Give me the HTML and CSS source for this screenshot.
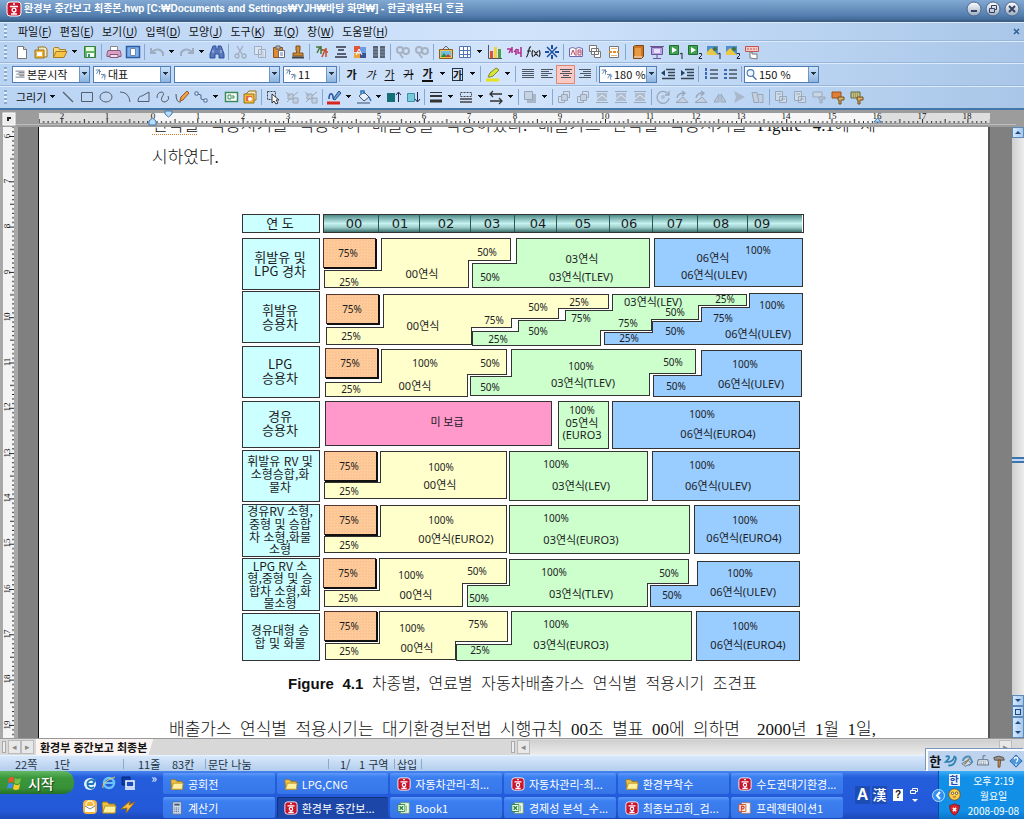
FILE: index.html
```html
<!DOCTYPE html>
<html lang="ko">
<head>
<meta charset="utf-8">
<title>환경부 중간보고 최종본.hwp</title>
<link rel="stylesheet" href="styles.css">
</head>
<body>
<svg class="defs" aria-hidden="true">
<defs>
<linearGradient id="head" x1="0" y1="0" x2="0" y2="1"><stop offset="0" stop-color="#4f8a88"/><stop offset=".2" stop-color="#7fb5b2"/><stop offset=".5" stop-color="#c4f2f0"/><stop offset=".72" stop-color="#9fd0cd"/><stop offset="1" stop-color="#3c6f6d"/></linearGradient>
<linearGradient id="orb" x1="0" y1="0" x2="0" y2="1"><stop offset="0" stop-color="#fff"/><stop offset="1" stop-color="#9aaabf"/></linearGradient>
<pattern id="dots" width="3" height="3" patternUnits="userSpaceOnUse"><rect width="3" height="3" fill="#fc9"/><path d="M0 0h1v1H0zM2 1h1v1H2z" fill="#f5bd92"/></pattern>
<pattern id="hticks" x="152" y="0" width="45.3" height="17" patternUnits="userSpaceOnUse"><path d="M.5 9v4M5 11v2M9.5 11v2M14 11v2M18.5 11v2M23 9v4M27.5 11v2M32 11v2M36.5 11v2M41 11v2" stroke="#222" fill="none"/></pattern>
<pattern id="vticks" x="0" y="9" width="16" height="45.3" patternUnits="userSpaceOnUse"><path d="M9 .5h5M12 5h2M12 9.5h2M12 14h2M12 18.5h2M10 23h4M12 27.5h2M12 32h2M12 36.5h2M12 41h2" stroke="#222" fill="none"/></pattern>
</defs>
<symbol id="hwp" viewBox="0 0 16 16"><rect x="1" y="1" width="14" height="14" rx="3" fill="#c8142d" stroke="#fff"/><path d="M7 3h2M4 5.500h8M5 13h6M8 11v2" stroke="#fff" stroke-width="1.400"/><circle cx="8" cy="9" r="1.900" fill="none" stroke="#fff" stroke-width="1.400"/></symbol>
<symbol id="new" viewBox="0 0 16 16"><path d="M3.500 2.500h6l3 3v9h-9z" fill="#fff" stroke="#777"/><path d="M9.500 2.500v3h3" fill="#ddd" stroke="#777"/></symbol>
<symbol id="newfold" viewBox="0 0 16 16"><path d="M5 3h7l2 2v8H7z" fill="#f5e9c4" stroke="#9a7420"/><path d="M2 6h9v8H2z" fill="#eeb53a" stroke="#9a7420"/><path d="M4 8h5v4H4z" fill="#fff"/></symbol>
<symbol id="fold" viewBox="0 0 16 16"><path d="M1.500 13.500v-9l1-1h4l1 2h6v2" fill="#f7d67a" stroke="#a67c1e"/><path d="M1.500 13.500L4 7.500h11l-3 6z" fill="#f6c445" stroke="#a67c1e"/></symbol>
<symbol id="folder" viewBox="0 0 16 16"><path d="M1 4l1-1h4l2 2h6v9H2z" fill="#f0c145" stroke="#9a7a20"/><path d="M2 13l2-6h11l-1 7H2z" fill="#fff0a0" stroke="#b8922a"/></symbol>
<symbol id="save" viewBox="0 0 16 16"><path d="M2.500 2.500h11v11h-11z" fill="#62b562" stroke="#35803b"/><path d="M4 3h8v4H4z" fill="#e4ffe0"/><path d="M5 9h7v4H5z" fill="#fff"/><path d="M6 10h2v3H6z" fill="#397"/></symbol>
<symbol id="print" viewBox="0 0 16 16"><path d="M4.500 2.500h7v4h-7z" fill="#fff" stroke="#888"/><path d="M2 6.500h12l1 3v3H1v-3z" fill="#d9a0c4" stroke="#875a7b"/><path d="M4 10.500h8v3H4z" fill="#f6dcf2" stroke="#875a7b"/></symbol>
<symbol id="preview" viewBox="0 0 16 16"><path d="M1.500 2.500h13v11h-13z" fill="#7fb0ee" stroke="#2d5ca5" stroke-width="1.500"/><path d="M5.500 4.500h5v7h-5z" fill="#fff" stroke="#6b87b5"/></symbol>
<symbol id="undo" viewBox="0 0 16 16"><path d="M2 4v5h5M3 8c4-4 9-3 11 1v3" fill="none" stroke="#9fadc0" stroke-width="2"/></symbol>
<symbol id="redo" viewBox="0 0 16 16"><path d="M14 4v5H9M13 8C9 4 4 5 2 9v3" fill="none" stroke="#9fadc0" stroke-width="2"/></symbol>
<symbol id="find" viewBox="0 0 16 16"><path d="M4 2h3v3h2V2h3l3 8v4h-5v-4H6v4H1v-4z" fill="#5878bd" stroke="#30509a"/><path d="M4 6v3M12 6v3" stroke="#bcd"/></symbol>
<symbol id="cut" viewBox="0 0 16 16"><g fill="none" stroke="#a0adbe" stroke-width="1.300"><path d="M4 2l5 8M10 2L5 10"/><circle cx="4" cy="12" r="2"/><circle cx="11" cy="12" r="2"/></g></symbol>
<symbol id="copy" viewBox="0 0 16 16"><path d="M2.500 2.500h7v8h-7zM6.500 5.500h7v8h-7z" fill="#dbe6f4" stroke="#a0adbe"/><path d="M8 8h4M8 10h4M8 12h4" stroke="#b6c1ce"/></symbol>
<symbol id="paste" viewBox="0 0 16 16"><path d="M2.500 3.500h9v10h-9z" fill="#dd8a35" stroke="#8a5524"/><path d="M5 2h4v3H5z" fill="#bbb" stroke="#666"/><path d="M7.500 6.500h6v7h-6z" fill="#fff" stroke="#667"/><path d="M9 9h3M9 11h3" stroke="#679"/></symbol>
<symbol id="stamp" viewBox="0 0 16 16"><path d="M6 2h4v4l-1 3h4v3H3V9h4L6 6z" fill="#c98a3a" stroke="#825017"/><path d="M2 13.500h12" stroke="#444" stroke-width="2"/></symbol>
<symbol id="charshape" viewBox="0 0 16 16"><path d="M2 3h4L3 9M7 2v8M7 6h2" stroke="#467a3b" stroke-width="1.500" fill="none"/><path d="M8 6h3l-3 7M12 4v9M12 8h2" stroke="#c44d2b" stroke-width="1.500" fill="none"/></symbol>
<symbol id="para" viewBox="0 0 16 16"><path d="M3 3h10M5 6h6M2 13h12M4 10h9" stroke="#334" stroke-width="1.600"/></symbol>
<symbol id="stylei" viewBox="0 0 16 16"><path d="M2 2h6v6H2z" fill="#e3543f"/><path d="M8 3h6v6H8z" fill="#6b9be0"/><path d="M2 9h6v5H2z" fill="#f0a23a"/><path d="M8 9h6v5H8z" fill="#3e4f92"/><path d="M4 11l3-6 3 6M5 9h4" stroke="#fff" fill="none"/></symbol>
<symbol id="cols" viewBox="0 0 16 16"><path d="M2 2h5v12H2zM9 2h5v12H9z" fill="#576273"/><path d="M2 5h5M9 5h5M2 8h5M9 8h5M2 11h5M9 11h5" stroke="#8794a6"/></symbol>
<symbol id="link" viewBox="0 0 16 16"><g fill="none" stroke="#a6b2c2" stroke-width="2"><circle cx="5" cy="6" r="3"/><circle cx="11" cy="7" r="3"/><path d="M5 10l3 4"/></g></symbol>
<symbol id="pic" viewBox="0 0 16 16"><path d="M5 5l3-3 3 3" fill="none" stroke="#666"/><path d="M1.500 5.500h13v9h-13z" fill="#f4c34e" stroke="#856022"/><path d="M3 7h10v6H3z" fill="#6fbee6"/><path d="M3 13l3-4 3 4z" fill="#2d8a3b"/><path d="M7 13l3-3 3 3z" fill="#c04030"/></symbol>
<symbol id="table" viewBox="0 0 16 16"><path d="M2.500 2.500h11v11h-11zM2.500 6.500h11M2.500 10.500h11M6.500 2.500v11M10.500 2.500v11" fill="#fff" stroke="#5277b3"/></symbol>
<symbol id="chart" viewBox="0 0 16 16"><path d="M1.500 1v13.500H15" stroke="#555" fill="none"/><path d="M3 7h3v7H3z" fill="#dc5437"/><path d="M7 3h3v11H7z" fill="#f3d23b"/><path d="M11 5h3v9h-3z" fill="#49a152"/></symbol>
<symbol id="art" viewBox="0 0 16 16"><path d="M1 5h4L3 9M6 3v6M8 8l3-3M10 5v6M12 5v4h3V3v10" fill="none" stroke="#b43390" stroke-width="1.600"/></symbol>
<symbol id="fx" viewBox="0 0 16 16"><path d="M6 3C3 2 4 13 1 13M2 7h4M8 6q-2 3 0 7M9 7l4 5M13 7l-4 5M14 6q2 3 0 7" fill="none" stroke="#222" stroke-width="1.200"/></symbol>
<symbol id="star" viewBox="0 0 16 16"><path d="M3 3l10 10M13 3L3 13" stroke="#1d4fa0" stroke-width="1.500"/><path d="M8 1v4M8 11v4M1 8h4M11 8h4" stroke="#1d4fa0" stroke-width="2"/></symbol>
<symbol id="dict" viewBox="0 0 16 16"><path d="M1.500 12.500v-8q3-2 6 0 3-2 7 0v8z" fill="#fff" stroke="#6a6aa8"/><path d="M3 11l2-5 2 5M8 5v7M10 6h3v5h-3zM10 8h3" stroke="#b64a6c" fill="none"/></symbol>
<symbol id="pages" viewBox="0 0 16 16"><path d="M2.500 1.500h7v6h-7zM4.500 4.500h7v6h-7zM7.500 7.500h6v6h-6z" fill="#fff" stroke="#777"/></symbol>
<symbol id="split" viewBox="0 0 16 16"><path d="M3.500 2.500h9v11h-9z" fill="#fff" stroke="#777"/><path d="M3 8h10" stroke="#e38e25" stroke-width="2" stroke-dasharray="3 1"/><path d="M5 4.500h6M5 11.500h6" stroke="#e8b775"/></symbol>
<symbol id="book" viewBox="0 0 16 16"><path d="M3.500 2.500l2-1h8v11l-2 2h-8z" fill="#cd7720" stroke="#7d4515"/><path d="M5 4h6v8H5z" fill="#e89b42"/><path d="M4 13h8" stroke="#fff"/></symbol>
<symbol id="screen" viewBox="0 0 16 16"><path d="M1 2.500h14M8 11v4M4 14.500h8" stroke="#6c5596"/><path d="M2.500 3.500h11v7h-11z" fill="#b6a3e3" stroke="#6c5596"/><path d="M5 5h6v4H5z" fill="#e8e0ff"/></symbol>
<symbol id="play1" viewBox="0 0 16 16"><path d="M1.500 1.500h9v9h-9z" fill="#3da151" stroke="#226b32"/><path d="M4 3l5 3-5 3z" fill="#fff"/><path d="M12 10l2-1v6" stroke="#223" fill="none"/></symbol>
<symbol id="play2" viewBox="0 0 16 16"><path d="M1.500 1.500h9v9h-9z" fill="#3da151" stroke="#226b32"/><path d="M4 3l5 3-5 3z" fill="#fff"/><path d="M12 9.500h2.500v2L12 14v.5h3" stroke="#223" fill="none"/></symbol>
<symbol id="photo1" viewBox="0 0 16 16"><path d="M1 2h11v9H1z" fill="#4f8fce"/><path d="M1 8l4-4 7 7H1z" fill="#eac842"/><circle cx="9" cy="5" r="2" fill="#416f35"/><path d="M12 10l2-1v6" stroke="#223" fill="none"/></symbol>
<symbol id="photo2" viewBox="0 0 16 16"><path d="M1 2h11v9H1z" fill="#4f8fce"/><path d="M1 8l4-4 7 7H1z" fill="#eac842"/><circle cx="9" cy="5" r="2" fill="#416f35"/><path d="M12 9.500h2.500v2L12 14v.5h3" stroke="#223" fill="none"/></symbol>
<symbol id="mapkey" viewBox="0 0 16 16"><path d="M1.500 2.500h13v5h-13z" fill="#f3cbc8" stroke="#c5534d"/><path d="M3 5h10" stroke="#c5534d" stroke-dasharray="2 1"/><path d="M6 14V8h2v2h5v5z" fill="#fff" stroke="#777"/></symbol>
<symbol id="mark" viewBox="0 0 16 16"><path d="M3 11l2-4 6-5 3 2-6 6-3 1z" fill="#d7e83a" stroke="#7e8428"/><path d="M1 14h13" stroke="#e9e21b" stroke-width="3"/></symbol>
<symbol id="aj" viewBox="0 0 16 16"><path d="M2 3.500h12M2 5.500h12M2 7.500h12M2 9.500h12M2 11.500h12" stroke="#4d5562"/></symbol>
<symbol id="al" viewBox="0 0 16 16"><path d="M2 3.500h12M2 5.500h8M2 7.500h11M2 9.500h7M2 11.500h12" stroke="#4d5562"/></symbol>
<symbol id="ac" viewBox="0 0 16 16"><path d="M2 3.500h12M4 5.500h8M2 7.500h12M5 9.500h6M3 11.500h10" stroke="#4d5562"/></symbol>
<symbol id="ar" viewBox="0 0 16 16"><path d="M2 3.500h12M6 5.500h8M3 7.500h11M7 9.500h7M2 11.500h12" stroke="#4d5562"/></symbol>
<symbol id="ind" viewBox="0 0 16 16"><path d="M6 3.500h9M8 6.500h7M8 9.500h7M2 12.500h13" stroke="#345" stroke-width="1.500"/><path d="M1 7l4-3v6z" fill="#246"/></symbol>
<symbol id="ind2" viewBox="0 0 16 16"><path d="M6 3.500h9M8 6.500h7M8 9.500h7M2 12.500h13" stroke="#345" stroke-width="1.500"/><path d="M6 7L2 4v6z" fill="#246"/></symbol>
<symbol id="list" viewBox="0 0 16 16"><path d="M7 4h8M7 8h8M7 12h8" stroke="#456" stroke-width="1.400"/><path d="M3 2v12" stroke="#3868b4" stroke-width="2" stroke-dasharray="3 1"/></symbol>
<symbol id="list2" viewBox="0 0 16 16"><path d="M7 4h8M7 8h8M7 12h8" stroke="#456" stroke-width="1.400"/><path d="M2 4h3M2 8h3M2 12h3" stroke="#3868b4" stroke-width="2"/></symbol>
<symbol id="glass" viewBox="0 0 16 16"><circle cx="6" cy="6" r="4.500" fill="#eef6ff" stroke="#4f79ad" stroke-width="1.500"/><path d="M9 10l5 5" stroke="#4f79ad" stroke-width="2"/></symbol>
<symbol id="ga" viewBox="0 0 16 16"><path d="M1 2h4L2 7M6 1v7M6 4h2M8 8h4l-3 5M13 7v8M13 10h2" fill="none" stroke="#5a80a8" stroke-width="1.200"/></symbol>
<symbol id="line" viewBox="0 0 16 16"><path d="M3 3l10 10" stroke="#555e6c" stroke-width="1.300"/></symbol>
<symbol id="rect" viewBox="0 0 16 16"><path d="M2.500 3.500h11v9h-11z" fill="none" stroke="#555e6c"/></symbol>
<symbol id="oval" viewBox="0 0 16 16"><ellipse cx="8" cy="8" rx="6" ry="5" fill="none" stroke="#555e6c"/></symbol>
<symbol id="arc" viewBox="0 0 16 16"><path d="M3 3q9 0 10 10" fill="none" stroke="#555e6c"/></symbol>
<symbol id="poly" viewBox="0 0 16 16"><path d="M2 12.500Q2 7 6 7l7-4v9.500z" fill="none" stroke="#555e6c"/></symbol>
<symbol id="curve" viewBox="0 0 16 16"><path d="M2 9q0-6 5-6 3 1 0 5-2 5 3 5 5-2 3-6" fill="none" stroke="#555e6c"/></symbol>
<symbol id="pen" viewBox="0 0 16 16"><path d="M2 5q0 9 5 8" fill="none" stroke="#555"/><path d="M6 12l1-4 6-6 2 2-6 7z" fill="#f0a04a" stroke="#95571d"/></symbol>
<symbol id="conn" viewBox="0 0 16 16"><path d="M2 3h3v3H2zM11 10h3v3h-3z" fill="#fff" stroke="#4b6a96"/><path d="M5 5l3 1v4l3 1" fill="none" stroke="#4b6a96"/></symbol>
<symbol id="tbox" viewBox="0 0 16 16"><path d="M2.500 3.500h12v9h-12z" fill="#fff" stroke="#3a8a5a" stroke-width="1.500"/><path d="M5 6h3v4H5zM10 6v4M10 8h2" stroke="#3a8a5a" fill="none"/></symbol>
<symbol id="clip" viewBox="0 0 16 16"><path d="M4 5l3-3h7v9h-2" fill="#f5e9c4" stroke="#99701b"/><path d="M2 5h10v9H2z" fill="#f1bd37" stroke="#99701b"/><path d="M4 7h6v5H4z" fill="#e8674a"/><circle cx="8" cy="10" r="2" fill="#fff"/></symbol>
<symbol id="sel" viewBox="0 0 16 16"><path d="M2.500 2.500h8v8h-8z" fill="none" stroke="#444" stroke-dasharray="2 1"/><path d="M7 5v9l2-2 2 3 2-1-2-3h3z" fill="#fff" stroke="#333"/></symbol>
<symbol id="grp" viewBox="0 0 16 16"><path d="M2 3l4 4M14 3L9 7M3 13l4-4M9 9h5v5H9zM4 5h5v5H4z" fill="#c3cfdf" stroke="#9aa8bb"/></symbol>
<symbol id="linec" viewBox="0 0 16 16"><path d="M3 10c0-7 4-6 4-2s3 1 6-5" fill="none" stroke="#2759a5" stroke-width="1.600"/><path d="M7 10l6-8 2 2-6 7z" fill="#6ba2de" stroke="#2a4d85"/><path d="M1 14h13" stroke="#d8261e" stroke-width="3"/></symbol>
<symbol id="fillc" viewBox="0 0 16 16"><path d="M3 7l5-4 5 5-5 4z" fill="#e8f0fa" stroke="#41536b"/><path d="M5 5V2h3v3M13 8l2 4" fill="none" stroke="#2b71bd" stroke-width="1.500"/><path d="M1 14h13" stroke="#6a7f9a" stroke-width="1.500"/></symbol>
<symbol id="front" viewBox="0 0 16 16"><path d="M1 4h8v9H1z" fill="#156f76"/><path d="M12.500 13V4M10 6l2.500-3L15 6" stroke="#224" fill="none"/></symbol>
<symbol id="back" viewBox="0 0 16 16"><path d="M2.500 4.500h7v8h-7z" fill="#77c9db" stroke="#3a91a8"/><path d="M12.500 3v9M10 10l2.500 3 2.500-3" stroke="#224" fill="none"/></symbol>
<symbol id="lw" viewBox="0 0 16 16"><path d="M2 3.500h12" stroke="#333"/><path d="M2 7h12" stroke="#333" stroke-width="2"/><path d="M2 12h12" stroke="#333" stroke-width="3"/></symbol>
<symbol id="ls" viewBox="0 0 16 16"><path d="M2.500 3.500h11v4h-11z" fill="none" stroke="#444" stroke-dasharray="2 1"/><path d="M2 10h12M2 13h12" stroke="#444" stroke-width="1.500"/></symbol>
<symbol id="arw" viewBox="0 0 16 16"><path d="M2 5h12M2 12h12M5 2L2 5l3 3M11 9l3 3-3 3" fill="none" stroke="#333" stroke-width="1.300"/></symbol>
<symbol id="gbox" viewBox="0 0 16 16"><path d="M5 5h9v9H5z" fill="#a9b6c7"/><path d="M2.500 2.500h8v8h-8z" fill="#c6d2e2" stroke="#97a5b8"/></symbol>
<symbol id="gtwo" viewBox="0 0 16 16"><path d="M7.500 2.500h6v6h-6zM2.500 7.500h6v6h-6z" fill="#d3dfee" stroke="#9aa8bb"/><path d="M5.500 5.500h6v6h-6z" fill="#c3d0e2" stroke="#9aa8bb"/></symbol>
<symbol id="gal" viewBox="0 0 16 16"><path d="M2 2.500h12M2 13.500h12" stroke="#9aa8bb"/><path d="M3 4h10v8H3z" fill="#b0bdce"/><path d="M3 10l5-4 5 4" fill="none" stroke="#e2eaf4"/></symbol>
<symbol id="grot" viewBox="0 0 16 16"><path d="M13 5a6 6 0 1 0 1 4M14 2v4h-4" fill="none" stroke="#9aa8bb" stroke-width="1.300"/><circle cx="8" cy="8" r="2" fill="#b0bdce"/></symbol>
<symbol id="gturn" viewBox="0 0 16 16"><path d="M2 13.500h12L9 8z" fill="#c3cfde" stroke="#98a6b9"/><path d="M3 9q1-5 7-5M8 2l3 2-3 3" fill="none" stroke="#98a6b9" stroke-width="1.300"/></symbol>
<symbol id="gtri" viewBox="0 0 16 16"><path d="M2 13l5-8v8zM9 13V5l5 8z" fill="#bac6d6" stroke="#98a6b9"/></symbol>
<symbol id="gflag" viewBox="0 0 16 16"><path d="M3 2l11 6-11 6 2-6z" fill="#aab7c8"/></symbol>
<symbol id="gskew" viewBox="0 0 16 16"><path d="M2 3.500h5l2 10H4zM8 5.500h5v8h-3" fill="#c3cfde" stroke="#98a6b9"/></symbol>
<symbol id="gdoc" viewBox="0 0 16 16"><path d="M2.500 2.500h7v9h-7zM6.500 7.500h7v6h-7z" fill="#cfdbe9" stroke="#9aa8bb"/><path d="M4 5h4M8 10h4" stroke="#9aa8bb"/></symbol>
<symbol id="brush" viewBox="0 0 16 16"><path d="M2 3h9v6H2z" fill="#e08038" stroke="#9b4f1c"/><path d="M8 8h6v3h-3v4h-2v-4H8z" fill="#ddae5c" stroke="#705020"/></symbol>
<symbol id="brush2" viewBox="0 0 16 16"><path d="M2 3h9v6H2z" fill="#c9bb7c" stroke="#5d6b3c"/><path d="M4 5h6M4 7h6" stroke="#6d7c50" stroke-dasharray="1 1"/><path d="M8 8h6v3h-3v4h-2v-4H8z" fill="#ddae5c" stroke="#705020"/></symbol>
<symbol id="gbrush" viewBox="0 0 16 16"><path d="M2 3h9v5H2z" fill="#c9d5e4" stroke="#9aa8bb"/><path d="M8 8h6v2h-3v4h-2v-4H8z" fill="#bac6d6" stroke="#9aa8bb"/></symbol>
<symbol id="ie" viewBox="0 0 16 16"><circle cx="8" cy="8" r="5" fill="none" stroke="#69c2ff" stroke-width="2.500"/><path d="M4 8h9" stroke="#69c2ff" stroke-width="2"/><path d="M2 13Q0 7 14 2" fill="none" stroke="#f2cc49"/></symbol>
<symbol id="globe" viewBox="0 0 16 16"><circle cx="8" cy="9" r="6" fill="#e4f4ff"/><path d="M12 6a4 4 0 1 0 0 6M5 9h6l3-6" fill="none" stroke="#2277bb" stroke-width="1.800"/></symbol>
<symbol id="pc" viewBox="0 0 16 16"><path d="M2 2h8v8H2z" fill="#0b3aa8" stroke="#06257a"/><path d="M6 6h8v6H6zM5 14h10" fill="#1c4cc0" stroke="#fff" stroke-width="1.500"/></symbol>
<symbol id="mail" viewBox="0 0 16 16"><rect x="1" y="1" width="14" height="14" rx="4" fill="#f6b63c"/><circle cx="8" cy="6" r="4" fill="none" stroke="#fff2c8" stroke-width="1.500"/><path d="M3 7h10v6H3z" fill="#fff"/><path d="M3 7l5 3 5-3" stroke="#888" fill="none"/></symbol>
<symbol id="bolt" viewBox="0 0 16 16"><path d="M1 10l9-8-1 4 6-3-9 11 1-5z" fill="#ffc144" stroke="#a36a10"/></symbol>
<symbol id="calc" viewBox="0 0 16 16"><path d="M3 1h10v14H3z" fill="#c8d6ec" stroke="#56709a"/><path d="M5 3h6v2H5z" fill="#456"/><path d="M5 8h6M5 10h6M5 12h6" stroke="#456" stroke-dasharray="1 1"/></symbol>
<symbol id="xl" viewBox="0 0 16 16"><path d="M4 2h10v12H4z" fill="#f3fff0" stroke="#709670"/><path d="M1 4h8v8H1z" fill="#eaffea" stroke="#29803c"/><path d="M3 6l4 4M7 6l-4 4" stroke="#29803c" stroke-width="1.500"/><path d="M11 5v7" stroke="#79ad79"/></symbol>
<symbol id="ppt" viewBox="0 0 16 16"><path d="M4 2h10v12H4z" fill="#fff" stroke="#a87868"/><path d="M1 4h8v8H1z" fill="#fff0e8" stroke="#d0492c"/><path d="M4 11V6h2q2 1 0 3H4" fill="none" stroke="#d0492c" stroke-width="1.500"/></symbol>
<symbol id="win" viewBox="0 0 16 16"><path d="M2 3q3-2 5 0L6 8Q4 6 1 8z" fill="#f0562b"/><path d="M8 3q3 2 6 0l-1 5q-3 2-6 0z" fill="#7bc043"/><path d="M1 9q3-2 5 0l-1 5q-2-2-5 0z" fill="#3f8df0"/><path d="M7 9q3 2 6 0l-1 5q-3 2-6 0z" fill="#fbc92e"/></symbol>
<symbol id="bird" viewBox="0 0 16 16"><path d="M3 3q6-2 3 3L3 9h4q5-1 6-6 3 1 1 5-2 6-8 5" fill="none" stroke="#2f82b5" stroke-width="2"/></symbol>
<symbol id="pad" viewBox="0 0 16 16"><path d="M3 8q2-6 8-5l3 6-4 4" fill="none" stroke="#4f8fb5" stroke-width="2"/><path d="M2 11l7-4 4 4-7 3z" fill="#c9dcea" stroke="#5d7488"/><path d="M5 12l6-7" stroke="#a07a45" stroke-width="1.500"/></symbol>
<symbol id="kbd" viewBox="0 0 16 16"><path d="M8 6V2h3" stroke="#567" fill="none"/><path d="M2.500 6.500h11l1 6h-13z" fill="#e6edf5" stroke="#567"/><path d="M4 9h8M4 11h8" stroke="#678" stroke-dasharray="1 1"/></symbol>
<symbol id="hammer" viewBox="0 0 16 16"><path d="M2 4q6-3 11 0l1 3H3z" fill="#98918a" stroke="#554c45"/><path d="M7 7h3l-1 8H7z" fill="#c79058" stroke="#704a25"/></symbol>
<symbol id="help" viewBox="0 0 16 16"><path d="M8 1l7 7-7 7-7-7z" fill="#4b98dd" stroke="#2461a0"/><circle cx="8" cy="8" r="5" fill="#4b98dd"/><path d="M6 6q0-2 2-2t2 2-2 3M8 11v2" stroke="#fff" stroke-width="1.500" fill="none"/></symbol>
<symbol id="smile" viewBox="0 0 16 16"><circle cx="8" cy="8" r="7" fill="#ffcf4d" stroke="#7a4a10"/><circle cx="5.500" cy="6.500" r="1.500" fill="#fff" stroke="#5a3a10"/><circle cx="10.500" cy="6.500" r="1.500" fill="#fff" stroke="#5a3a10"/><path d="M6 11h4" stroke="#7a3a10"/></symbol>
<symbol id="shield" viewBox="0 0 16 16"><path d="M8 1q3 2 6 2 0 9-6 12Q2 12 2 3q3 0 6-2z" fill="#d9252a" stroke="#7a1520"/><path d="M6 6l4 4M10 6l-4 4" stroke="#fff" stroke-width="1.800"/></symbol>
</svg>

<div class="app">
<header class="title">
  <svg class="ic logo"><use href="#hwp"/></svg>
  <h1>환경부 중간보고 최종본.hwp [C:₩Documents and Settings₩YJH₩바탕 화면₩] - 한글과컴퓨터 ᄒᆞᆫ글</h1>
  <div class="winbtns">
    <button aria-label="최소화"><svg width="16" height="16"><circle cx="8" cy="8" r="7" fill="url(#orb)" stroke="#48678e"/><path d="M5 10h6" stroke="#346" stroke-width="2"/></svg></button>
    <button aria-label="이전 크기로"><svg width="16" height="16"><circle cx="8" cy="8" r="7" fill="url(#orb)" stroke="#48678e"/><path d="M6.500 7V4.500h5v4H9M4.500 7.500h5v4h-5z" fill="none" stroke="#346"/></svg></button>
    <button aria-label="닫기"><svg width="16" height="16"><circle cx="8" cy="8" r="7" fill="url(#orb)" stroke="#48678e"/><path d="M5 5l6 6M11 5l-6 6" stroke="#346" stroke-width="2"/></svg></button>
  </div>
</header>
<nav class="bar menu"><i class="grip"></i>
  <button>파일(<u>F</u>)</button><button>편집(<u>E</u>)</button><button>보기(<u>U</u>)</button><button>입력(<u>D</u>)</button><button>모양(<u>J</u>)</button><button>도구(<u>K</u>)</button><button>표(<u>Q</u>)</button><button>창(<u>W</u>)</button><button>도움말(<u>H</u>)</button>
  <button class="docx" aria-label="문서 닫기"><svg width="7" height="7"><path d="M1 1l5 5M6 1L1 6" stroke="#2c5f96" stroke-width="1.500"/></svg></button>
</nav>
<div class="bar tools"><i class="grip"></i>
  <button class="t" aria-label="새 문서"><svg class="ic"><use href="#new"/></svg></button><button class="t" aria-label="문서마당"><svg class="ic"><use href="#newfold"/></svg></button><button class="t" aria-label="불러오기"><svg class="ic"><use href="#fold"/></svg></button><i class="dn"></i><button class="t" aria-label="저장"><svg class="ic"><use href="#save"/></svg></button><i class="sp"></i>
  <button class="t" aria-label="인쇄"><svg class="ic"><use href="#print"/></svg></button><button class="t" aria-label="미리보기"><svg class="ic"><use href="#preview"/></svg></button><i class="sp"></i>
  <button class="t" aria-label="되돌리기"><svg class="ic"><use href="#undo"/></svg></button><i class="dn"></i><button class="t" aria-label="다시 실행"><svg class="ic"><use href="#redo"/></svg></button><i class="dn"></i><button class="t" aria-label="찾기"><svg class="ic"><use href="#find"/></svg></button><i class="sp"></i>
  <button class="t" aria-label="오려두기"><svg class="ic"><use href="#cut"/></svg></button><button class="t" aria-label="복사"><svg class="ic"><use href="#copy"/></svg></button><button class="t" aria-label="붙이기"><svg class="ic"><use href="#paste"/></svg></button><button class="t" aria-label="모양 복사"><svg class="ic"><use href="#stamp"/></svg></button><i class="sp"></i>
  <button class="t" aria-label="글자 모양"><svg class="ic"><use href="#charshape"/></svg></button><button class="t" aria-label="문단 모양"><svg class="ic"><use href="#para"/></svg></button><button class="t" aria-label="스타일"><svg class="ic"><use href="#stylei"/></svg></button><button class="t" aria-label="다단"><svg class="ic"><use href="#cols"/></svg></button><i class="sp"></i>
  <button class="t" aria-label="연결"><svg class="ic"><use href="#link"/></svg></button><button class="t" aria-label="연결 해제"><svg class="ic"><use href="#link"/></svg></button><i class="sp"></i>
  <button class="t" aria-label="그림"><svg class="ic"><use href="#pic"/></svg></button><button class="t" aria-label="표"><svg class="ic"><use href="#table"/></svg></button><i class="dn"></i><button class="t" aria-label="차트"><svg class="ic"><use href="#chart"/></svg></button><button class="t" aria-label="글맵시"><svg class="ic"><use href="#art"/></svg></button><button class="t" aria-label="수식"><svg class="ic"><use href="#fx"/></svg></button><button class="t" aria-label="문자표"><svg class="ic"><use href="#star"/></svg></button><i class="sp"></i>
  <button class="t" aria-label="사전"><svg class="ic"><use href="#dict"/></svg></button><button class="t" aria-label="쪽 모양"><svg class="ic"><use href="#pages"/></svg></button><button class="t" aria-label="쪽 나누기"><svg class="ic"><use href="#split"/></svg></button><i class="sp"></i>
  <button class="t" aria-label="책"><svg class="ic"><use href="#book"/></svg></button><button class="t" aria-label="프레젠테이션"><svg class="ic"><use href="#screen"/></svg></button><button class="t" aria-label="매크로 1"><svg class="ic"><use href="#play1"/></svg></button><button class="t" aria-label="매크로 2"><svg class="ic"><use href="#play2"/></svg></button><button class="t" aria-label="그림 1"><svg class="ic"><use href="#photo1"/></svg></button><button class="t" aria-label="그림 2"><svg class="ic"><use href="#photo2"/></svg></button><button class="t" aria-label="단축키"><svg class="ic"><use href="#mapkey"/></svg></button>
</div>
<div class="bar tools fmt"><i class="grip"></i>
  <label class="combo w78"><svg class="ic s"><use href="#ar"/></svg><select aria-label="스타일"><option>본문시작</option></select><i class="dd"></i></label>
  <label class="combo w78"><svg class="ic s"><use href="#ga"/></svg><select aria-label="언어"><option>대표</option></select><i class="dd"></i></label>
  <label class="combo w106"><select aria-label="글꼴"><option></option></select><i class="dd"></i></label>
  <label class="combo w54"><svg class="ic s"><use href="#ga"/></svg><select aria-label="크기"><option>11</option></select><i class="dd"></i></label><i class="sp"></i>
  <button class="t g b" aria-label="진하게">가</button><button class="t g it" aria-label="기울임">가</button><button class="t g un" aria-label="밑줄">가</button><button class="t g st" aria-label="취소선">가</button><button class="t g b" aria-label="글자 색"><span class="ub">가</span></button><i class="dn"></i><button class="t g b" aria-label="테두리"><span class="bx">가</span></button><i class="dn"></i><i class="sp"></i>
  <button class="t" aria-label="형광펜"><svg class="ic"><use href="#mark"/></svg></button><i class="dn"></i><i class="sp"></i>
  <button class="t" aria-label="양쪽 정렬"><svg class="ic"><use href="#aj"/></svg></button><button class="t" aria-label="왼쪽 정렬"><svg class="ic"><use href="#al"/></svg></button><button class="t on" aria-label="가운데 정렬"><svg class="ic"><use href="#ac"/></svg></button><button class="t" aria-label="오른쪽 정렬"><svg class="ic"><use href="#ar"/></svg></button><i class="sp"></i>
  <label class="combo w58"><svg class="ic s"><use href="#ga"/></svg><select aria-label="줄 간격"><option>180 %</option></select><i class="dd"></i></label>
  <button class="t" aria-label="내어쓰기"><svg class="ic"><use href="#ind"/></svg></button><button class="t" aria-label="들여쓰기"><svg class="ic"><use href="#ind2"/></svg></button><i class="sp"></i>
  <button class="t" aria-label="번호"><svg class="ic"><use href="#list"/></svg></button><button class="t" aria-label="글머리표"><svg class="ic"><use href="#list2"/></svg></button><i class="sp"></i>
  <label class="combo w75"><svg class="ic s"><use href="#glass"/></svg><select aria-label="확대"><option>150 %</option></select><i class="dd"></i></label>
</div>
<div class="bar tools draw"><i class="grip"></i>
  <button class="dlabel">그리기</button><i class="dn"></i>
  <button class="t" aria-label="선"><svg class="ic"><use href="#line"/></svg></button><button class="t" aria-label="사각형"><svg class="ic"><use href="#rect"/></svg></button><button class="t" aria-label="타원"><svg class="ic"><use href="#oval"/></svg></button><button class="t" aria-label="호"><svg class="ic"><use href="#arc"/></svg></button><button class="t" aria-label="다각형"><svg class="ic"><use href="#poly"/></svg></button><button class="t" aria-label="곡선"><svg class="ic"><use href="#curve"/></svg></button><button class="t" aria-label="자유선"><svg class="ic"><use href="#pen"/></svg></button><button class="t" aria-label="연결선"><svg class="ic"><use href="#conn"/></svg></button><i class="dn"></i><button class="t" aria-label="글상자"><svg class="ic"><use href="#tbox"/></svg></button><button class="t" aria-label="그리기마당"><svg class="ic"><use href="#clip"/></svg></button><i class="sp"></i>
  <button class="t" aria-label="개체 선택"><svg class="ic"><use href="#sel"/></svg></button><button class="t" aria-label="묶기"><svg class="ic"><use href="#grp"/></svg></button><button class="t" aria-label="풀기"><svg class="ic"><use href="#grp"/></svg></button><i class="sp"></i>
  <button class="t" aria-label="선 색"><svg class="ic"><use href="#linec"/></svg></button><i class="dn"></i><button class="t" aria-label="채우기 색"><svg class="ic"><use href="#fillc"/></svg></button><i class="dn"></i><button class="t" aria-label="앞으로"><svg class="ic"><use href="#front"/></svg></button><button class="t" aria-label="뒤로"><svg class="ic"><use href="#back"/></svg></button><i class="sp"></i>
  <button class="t" aria-label="선 굵기"><svg class="ic"><use href="#lw"/></svg></button><i class="dn"></i><button class="t" aria-label="선 종류"><svg class="ic"><use href="#ls"/></svg></button><i class="dn"></i><button class="t" aria-label="화살표"><svg class="ic"><use href="#arw"/></svg></button><i class="dn"></i><i class="sp"></i>
  <button class="t" aria-label="그림자"><svg class="ic"><use href="#gbox"/></svg></button><i class="dn"></i><i class="sp"></i>
  <button class="t" aria-label="맨 앞"><svg class="ic"><use href="#gtwo"/></svg></button><button class="t" aria-label="맨 뒤"><svg class="ic"><use href="#gtwo"/></svg></button><button class="t" aria-label="위 맞춤"><svg class="ic"><use href="#gal"/></svg></button><button class="t" aria-label="중간 맞춤"><svg class="ic"><use href="#gal"/></svg></button><button class="t" aria-label="아래 맞춤"><svg class="ic"><use href="#gal"/></svg></button><i class="sp"></i>
  <button class="t" aria-label="회전"><svg class="ic"><use href="#grot"/></svg></button><button class="t" aria-label="왼쪽 회전"><svg class="ic"><use href="#gturn"/></svg></button><button class="t" aria-label="오른쪽 회전"><svg class="ic"><use href="#gturn"/></svg></button><button class="t" aria-label="좌우 대칭"><svg class="ic"><use href="#gtri"/></svg></button><button class="t" aria-label="상하 대칭"><svg class="ic"><use href="#gflag"/></svg></button><button class="t" aria-label="기울이기"><svg class="ic"><use href="#gskew"/></svg></button><i class="sp"></i>
  <button class="t" aria-label="개체 복사"><svg class="ic"><use href="#gdoc"/></svg></button><button class="t" aria-label="개체 붙이기"><svg class="ic"><use href="#gdoc"/></svg></button><button class="t" aria-label="속성 복사"><svg class="ic"><use href="#gbrush"/></svg></button><button class="t" aria-label="속성 붙이기"><svg class="ic"><use href="#brush"/></svg></button><button class="t" aria-label="기본 속성"><svg class="ic"><use href="#brush2"/></svg></button>
</div>

<div class="hruler">
<svg width="100%" height="17" aria-hidden="true">
<rect width="100%" height="17" fill="#9c9c9c"/><rect x="3" y="3" width="12" height="12" fill="#ececec" stroke="#fff"/><path d="M8 11V8h3" stroke="#222" fill="none" stroke-width="2"/>
<rect x="39" y="3" width="951" height="10" fill="#dedede"/><rect x="152" y="3" width="726" height="10" fill="#f6f6f6"/><rect x="39" y="3" width="951" height="10" fill="url(#hticks)"/>
<path d="M16 14.500h1000" stroke="#bdbdbd"/>
<g class="rnum"><text x="62" y="9">2</text><text x="107" y="9">1</text><text x="153" y="9">0</text><text x="198" y="9">1</text><text x="243" y="9">2</text><text x="288" y="9">3</text><text x="334" y="9">4</text><text x="379" y="9">5</text><text x="424" y="9">6</text><text x="469" y="9">7</text><text x="515" y="9">8</text><text x="560" y="9">9</text><text x="605" y="9">10</text><text x="650" y="9">11</text><text x="696" y="9">12</text><text x="741" y="9">13</text><text x="786" y="9">14</text><text x="832" y="9">15</text><text x="877" y="9">16</text><text x="922" y="9">17</text><text x="967" y="9">18</text></g>
<path d="M149 15v-4l3.500-3 3.500 3v4zM165 1h7v3l-3.500 3L165 4zM874 12l3.500-4 3.500 4z" fill="#b9dcf8" stroke="#3c78b4"/>
</svg></div>

<main class="doc">
  <svg class="vruler" width="18" height="100%" aria-hidden="true"><rect width="18" height="100%" fill="#a8a8a8"/><rect x="3" width="11" height="100%" fill="#f4f4f4"/><rect width="14" height="100%" fill="url(#vticks)"/>
  <g class="rnum"><text transform="translate(10 9) rotate(-90)">6</text><text transform="translate(10 54) rotate(-90)">7</text><text transform="translate(10 99) rotate(-90)">8</text><text transform="translate(10 145) rotate(-90)">9</text><text transform="translate(10 190) rotate(-90)">10</text><text transform="translate(10 235) rotate(-90)">11</text><text transform="translate(10 280) rotate(-90)">12</text><text transform="translate(10 326) rotate(-90)">13</text><text transform="translate(10 371) rotate(-90)">14</text><text transform="translate(10 416) rotate(-90)">15</text><text transform="translate(10 462) rotate(-90)">16</text><text transform="translate(10 507) rotate(-90)">17</text><text transform="translate(10 552) rotate(-90)">18</text><text transform="translate(10 598) rotate(-90)">19</text></g></svg>
  <article class="page">
    <p class="full first"><span class="sq">연식별</span> 적용시기를 적용하여 배출량을 적용하였다. 배출가스 연식별 적용시기를 Figure 4.1에 제</p>
    <p>시하였다.</p>
    <svg class="fig" width="564" height="450" viewBox="241 212 564 450" role="img" aria-label="연식별 적용시기 조견표">
      <g class="c"><path d="M242.500 214.500h77v18h-77zM242.500 238.500h77v51h-77zM242.500 291.500h77v51h-77zM242.500 346.500h77v51h-77zM242.500 401.500h77v46h-77zM242.500 450.500h77v51h-77zM242.500 504.500h77v52h-77zM242.500 558.500h77v52h-77zM242.500 613.500h77v47h-77z"/></g>
      <path class="w" d="M323.500 214.500h480v18h-480z"/><path fill="url(#head)" d="M324 215h478v17H324z"/>
      <path class="l" d="M378.500 214v18M419.500 214v18M470.500 214v18M514.500 214v18M556.500 214v18M609.500 214v18M652.500 214v18M697.500 214v18M747.500 214v18"/>
      <g class="y"><path d="M381.500 238.500h129v22h-42v27h-144v-17h57zM383.500 294.500h225v14h-50v10h-47v9h-40v17h-145v-17h57zM381.500 349.500h125v25h-39v22h-142v-14h56zM380.500 451.500h126v47h-182v-16h56zM380.500 505.500h126v47h-182v-16h56zM379.500 558.500h127v25h-44v23h-138v-16h55zM379.500 611.500h128v30h-52v18h-130v-16h54z"/></g>
      <g class="g"><path d="M516.500 238.500h133v49h-177v-24h44zM472.500 331.500h46v-11h47v-10h47v-16h134v11h-48v14h-47v11h-51v15h-128zM511.500 349.500h184v24h-46v22h-179v-19h41zM558.500 401.500h50v47h-50zM509.500 451.500h138v49h-138zM509.500 505.500h180v48h-180zM509.500 559.500h179v24h-41v23h-180v-21h42zM511.500 611.500h180v49h-235v-16h55z"/></g>
      <g class="b"><path d="M654.500 238.500h148v48h-148zM604.500 332.500h48v-11h49v-14h48v-14h53v51h-198zM701.500 350.500h100v46h-148v-21h48zM612.500 401.500h187v47h-187zM652.500 451.500h147v49h-147zM694.500 505.500h105v48h-105zM697.500 561.500h102v45h-149v-21h47zM696.500 611.500h103v49h-103z"/></g>
      <path class="p" d="M325.500 401.500h226v44h-226z"/>
      <g class="o"><path d="M323.500 238.500h52v29h-52zM326.500 294.500h52v29h-52zM325.500 348.500h52v29h-52zM324.500 451.500h52v29h-52zM324.500 505.500h52v29h-52zM323.500 558.500h52v29h-52zM324.500 611.500h52v29h-52z"/></g>
      <path class="k" d="M376 239v29h-52M379 295v29h-52M378 349v29h-52M377 452v29h-52M377 506v29h-52M376 559v29h-52M377 612v29h-52"/>
      <g class="h"><text x="280" y="228" class="kr">연 도</text><text x="354" y="228">00</text><text x="400" y="228">01</text><text x="446" y="228">02</text><text x="492" y="228">03</text><text x="538" y="228">04</text><text x="583" y="228">05</text><text x="629" y="228">06</text><text x="675" y="228">07</text><text x="721" y="228">08</text><text x="762" y="228">09</text></g>
      <g class="n"><text x="280" y="262">휘발유 및</text><text x="280" y="276">LPG 경차</text><text x="280" y="315">휘발유</text><text x="280" y="329">승용차</text><text x="280" y="369">LPG</text><text x="280" y="383">승용차</text><text x="280" y="421">경유</text><text x="280" y="435">승용차</text></g>
      <g class="m"><text x="280" y="466">휘발유 RV 및</text><text x="280" y="479">소형승합,화</text><text x="280" y="492">물차</text><text x="280" y="516">경유RV 소형,</text><text x="280" y="529">중형 및 승합</text><text x="280" y="542">차 소형,화물</text><text x="280" y="554">소형</text><text x="280" y="571">LPG RV 소</text><text x="280" y="583">형,중형 및 승</text><text x="280" y="596">합차 소형,화</text><text x="280" y="608">물소형</text><text x="280" y="635">경유대형 승</text><text x="280" y="648">합 및 화물</text></g>
      <g class="v">
      <text x="348" y="257">75%</text><text x="349" y="286">25%</text><text x="487" y="256">50%</text><text x="490" y="281">50%</text><text x="758" y="254">100%</text>
      <text x="352" y="313">75%</text><text x="351" y="340">25%</text><text x="494" y="324">75%</text><text x="498" y="343">25%</text><text x="538" y="311">50%</text><text x="538" y="335">50%</text><text x="579" y="306">25%</text><text x="581" y="322">75%</text><text x="628" y="327">75%</text><text x="629" y="342">25%</text><text x="675" y="316">50%</text><text x="675" y="335">50%</text><text x="725" y="303">25%</text><text x="723" y="322">75%</text><text x="772" y="309">100%</text>
      <text x="350" y="367">75%</text><text x="351" y="393">25%</text><text x="425" y="367">100%</text><text x="490" y="367">50%</text><text x="490" y="391">50%</text><text x="581" y="370">100%</text><text x="673" y="366">50%</text><text x="676" y="390">50%</text><text x="745" y="368">100%</text>
      <text x="582" y="414">100%</text><text x="702" y="418">100%</text>
      <text x="349" y="470">75%</text><text x="349" y="495">25%</text><text x="441" y="471">100%</text><text x="556" y="468">100%</text><text x="702" y="469">100%</text>
      <text x="349" y="524">75%</text><text x="349" y="549">25%</text><text x="441" y="524">100%</text><text x="556" y="522">100%</text><text x="745" y="524">100%</text>
      <text x="348" y="577">75%</text><text x="348" y="602">25%</text><text x="411" y="579">100%</text><text x="477" y="575">50%</text><text x="479" y="602">50%</text><text x="554" y="576">100%</text><text x="669" y="577">50%</text><text x="672" y="599">50%</text><text x="740" y="577">100%</text>
      <text x="349" y="630">75%</text><text x="349" y="655">25%</text><text x="412" y="632">100%</text><text x="478" y="628">75%</text><text x="480" y="654">25%</text><text x="556" y="628">100%</text><text x="745" y="630">100%</text></g>
      <g class="q">
      <text x="422" y="278">00연식</text><text x="582" y="263">03연식</text><text x="581" y="281">03연식(TLEV)</text><text x="713" y="262">06연식</text><text x="714" y="279">06연식(ULEV)</text>
      <text x="423" y="330">00연식</text><text x="653" y="306">03연식(LEV)</text><text x="758" y="338">06연식(ULEV)</text>
      <text x="415" y="390">00연식</text><text x="583" y="387">03연식(TLEV)</text><text x="751" y="388">06연식(ULEV)</text>
      <text x="447" y="426">미 보급</text><text x="582" y="427">05연식</text><text x="582" y="439">(EURO3</text><text x="718" y="438">06연식(EURO4)</text>
      <text x="440" y="489">00연식</text><text x="581" y="490">03연식(LEV)</text><text x="718" y="490">06연식(ULEV)</text>
      <text x="456" y="543">00연식(EURO2)</text><text x="581" y="544">03연식(EURO3)</text><text x="744" y="542">06연식(EURO4)</text>
      <text x="416" y="599">00연식</text><text x="581" y="598">03연식(TLEV)</text><text x="743" y="596">06연식(ULEV)</text>
      <text x="417" y="652">00연식</text><text x="571" y="649">03연식(EURO3)</text><text x="748" y="649">06연식(EURO4)</text></g>
    </svg>
    <p class="full cap"><b>Figure 4.1</b> 차종별, 연료별 자동차배출가스 연식별 적용시기 조견표</p>
    <p class="full last">배출가스 연식별 <span class="sq">적용시기</span>는 대기환경보전법 시행규칙 00조 별표 00에 의하면 &nbsp;2000년 1월 1일,</p>
  </article>
  <div class="vscroll"><button aria-label="위로"><i class="up"></i></button><div class="track"><i class="thumb"></i></div><button aria-label="아래로"><i class="down"></i></button><button aria-label="쪽 선택"><i class="sq0"></i></button><button class="tall" aria-label="이전/다음 쪽"><i class="up"></i><i class="down"></i></button></div>
</main>

<div class="tabs"><i class="split"></i><button class="nav" aria-label="이전 탭">◂</button><button class="nav" aria-label="다음 탭">▸</button><button class="tab">환경부 중간보고 최종본</button>
  <div class="hscroll"><i class="split"></i><button class="nav" aria-label="왼쪽">◂</button><div class="htrack"></div><button class="nav" aria-label="오른쪽">▸</button></div></div>
<footer class="status"><span class="a">22쪽</span><span class="d">1단</span><span class="c1 bl">11줄</span><span class="c2">83칸</span><span class="c3 bl">문단 나눔</span><span class="c4 bl">1/</span><span class="c5">1 구역</span><span class="c6 bl">삽입</span><span class="bl">&nbsp;</span>
  <div class="ime"><b>한</b><svg class="ic"><use href="#bird"/></svg><svg class="ic"><use href="#pad"/></svg><svg class="ic"><use href="#kbd"/></svg><svg class="ic"><use href="#hammer"/></svg><svg class="ic"><use href="#help"/></svg></div>
</footer>
</div>

<footer class="taskbar">
  <button class="start"><svg class="ic"><use href="#win"/></svg>시작</button>
  <div class="quick"><svg class="ic"><use href="#globe"/></svg><svg class="ic"><use href="#ie"/></svg><svg class="ic"><use href="#pc"/></svg><svg class="ic"><use href="#mail"/></svg><svg class="ic"><use href="#folder"/></svg><svg class="ic"><use href="#bolt"/></svg></div>
  <span class="more">»</span>
  <div class="tasks">
    <button><svg class="ic"><use href="#folder"/></svg>공회전</button><button><svg class="ic"><use href="#folder"/></svg>LPG,CNG</button><button><svg class="ic"><use href="#hwp"/></svg>자동차관리-최...</button><button><svg class="ic"><use href="#hwp"/></svg>자동차관리-최...</button><button><svg class="ic"><use href="#folder"/></svg>환경부착수</button><button><svg class="ic"><use href="#hwp"/></svg>수도권대기환경...</button>
    <button><svg class="ic"><use href="#calc"/></svg>계산기</button><button class="act"><svg class="ic"><use href="#hwp"/></svg>환경부 중간보...</button><button><svg class="ic"><use href="#xl"/></svg>Book1</button><button><svg class="ic"><use href="#xl"/></svg>경제성 분석_수...</button><button><svg class="ic"><use href="#hwp"/></svg>최종보고회_검...</button><button><svg class="ic"><use href="#ppt"/></svg>프레젠테이션1</button>
  </div>
  <div class="lang"><b class="on1">A</b><b class="on1 han">漢</b><b class="qm">?</b><svg class="ic" viewBox="0 0 16 16"><path d="M5.500 3.500V1.500h5v3h-2M3.500 3.500h5v3h-5z" fill="none" stroke="#fff"/><path d="M5 12h6l-3 3z" fill="#fff"/></svg></div>
  <div class="tray"><button class="exp" aria-label="숨겨진 아이콘"><svg width="11" height="11"><path d="M7 2L4 5.500 7 9" fill="none" stroke="#fff" stroke-width="2"/></svg></button><div class="ticons"><b>한</b><svg class="ic"><use href="#smile"/></svg><svg class="ic"><use href="#shield"/></svg></div><div class="clock"><span>오후 2:19</span><span>월요일</span><span>2008-09-08</span></div></div>
</footer>
</body>
</html>
```
FILE: styles.css
```css
* { box-sizing: border-box; }
body { margin: 0; height: 100vh; display: flex; flex-direction: column; overflow: hidden; font: 12px/16px "Noto Sans CJK KR", sans-serif; color: #111; }
button { margin: 0; padding: 0; border: 0; background: none; font: inherit; color: inherit; white-space: nowrap; }
i { font-style: normal; flex: none; }
.defs { position: absolute; width: 0; height: 0; }
.ic { width: 16px; height: 16px; flex: none; display: block; }
.app { flex: 1; min-height: 0; display: flex; flex-direction: column; }
.title { height: 22px; flex: none; display: flex; align-items: center; padding: 0 4px 2px 6px; background: linear-gradient(#82a9d3, #7199c5 30%, #5580af 75%, #41699a); border-bottom: 2px solid #3c5f86; color: #fff; }
.title h1 { flex: 1; margin: 0 0 0 2px; font: 700 10px/16px "Liberation Sans", "Noto Sans CJK KR", sans-serif; white-space: nowrap; }
.winbtns { display: flex; gap: 3px; }
.winbtns svg, .docx svg, .exp svg { display: block; }
.bar { flex: none; height: 23px; display: flex; align-items: center; padding-left: 4px; background: linear-gradient(90deg, #b9d3f3, #d2e4fb 50%, #c0d8f5 70%, #a9c6e8); border-bottom: 1px solid #98b7da; box-shadow: inset 0 1px #dceafc; }
.menu { height: 19px; font-size: 11px; }
.menu button { margin-right: 8px; }
.menu .grip + button { margin-left: 6px; }
.menu .docx { margin: 0 4px 0 auto; }
.tools:nth-of-type(1) { height: 22px; }
.draw { border-bottom: 2px solid #4377ab; height: 24px; }
.grip { width: 3px; height: 14px; margin-right: 5px; background: repeating-linear-gradient(#8aa9cd 0 2px, #e2eefc 2px 4px); }
.t { width: 19px; height: 19px; flex: none; display: flex; align-items: center; justify-content: center; }
.dn { width: 11px; height: 6px; background: linear-gradient(#111, #111) 3px 1px / 5px 1px no-repeat, linear-gradient(#111, #111) 4px 2px / 3px 1px no-repeat, linear-gradient(#111, #111) 5px 3px / 1px 1px no-repeat; }
.sp { width: 5px; height: 16px; background: linear-gradient(#87a8ce, #87a8ce) 2px 0 / 1px 16px no-repeat; }
.draw .sp { width: 4px; }
.combo { height: 17px; flex: none; display: flex; align-items: center; background: #fff; border: 1px solid #4f7db4; margin-right: 3px; }
.fmt .grip { margin-right: 5px; }
.combo select { appearance: none; flex: 1; min-width: 0; width: 0; height: 15px; border: 0; padding: 0 0 0 1px; background: none; font: 11px/15px "Noto Sans CJK KR", sans-serif; color: #111; }
.combo .s { width: 12px; height: 13px; margin-left: 1px; }
.dd { width: 10px; height: 15px; border-left: 1px solid #6d96c4; background: linear-gradient(#234, #234) 2px 5px / 5px 1px no-repeat, linear-gradient(#234, #234) 3px 6px / 3px 1px no-repeat, linear-gradient(#234, #234) 4px 7px / 1px 1px no-repeat, linear-gradient(#cde2fa, #8db4e0); }
.w78 { width: 78px; }
.w106 { width: 106px; }
.w54 { width: 54px; }
.w58 { width: 58px; }
.w75 { width: 75px; }
.fmt .w54 { margin-right: 0; }
.fmt .w58 { margin-right: 1px; }
.g { font-size: 11px; line-height: 16px; }
.b { font-weight: 700; }
.it { font-style: italic; }
.un { text-decoration: underline; }
.st { text-decoration: line-through; }
.ub { border-bottom: 2px solid #111; line-height: 13px; }
.bx { border: 1px solid #234; line-height: 11px; font-size: 10px; }
.on { background: #f9c9c2; border: 1px solid #e08878; }
.dlabel { padding: 0 1px 0 4px; font-size: 11px; }

.hruler { flex: none; height: 17px; }
.hruler svg { display: block; }
.rnum text { font: 9px "Liberation Serif", serif; fill: #111; text-anchor: middle; }
.doc { flex: 1; min-height: 0; display: flex; background: #808080; overflow: hidden; }
.vruler { flex: none; margin-right: 20px; }
.page { flex: 1; min-width: 0; margin-right: 22px; border-left: 1px solid #111; border-right: 2px solid #555; background: #fff; padding: 0 112px 0 113px; overflow: hidden; font: 300 17px/30px "Liberation Serif", "Noto Sans CJK KR", serif; }
.page p { margin: 0; white-space: nowrap; }
.page .full { white-space: normal; text-align-last: justify; height: 30px; }
.page .first { margin: -16px 0 2px; }
.sq { text-decoration: underline dotted #d08030 1px; text-underline-offset: 3px; }
.fig { display: block; margin: 39px 0 0 89px; }
.page .cap { margin: 7px 119px 0 136px; font-size: 16px; }
.cap b { font: 700 15px "Liberation Sans", sans-serif; }
.page .last { margin: 16px 0 0 17px; }
.fig path { shape-rendering: crispEdges; }
.c, .y, .g path, .b path, .p, .w { stroke: #333; }
.c { fill: #cff; }
.y { fill: #ffc; }
.fig .g { fill: #cfc; }
.fig .b { fill: #9cf; }
.p { fill: #f9c; }
.w { fill: #fff; }
.l { stroke: #2c5553; }
.o { fill: url(#dots); stroke: #533; }
.k { fill: none; stroke: #111; stroke-width: 2px; }
.fig text { text-anchor: middle; fill: #1c1c24; }
.h text { font: 13px "DejaVu Sans", sans-serif; }
.h .kr, .n text { font: 13px "Noto Sans CJK KR", sans-serif; }
.m text { font: 12px "Noto Sans CJK KR", sans-serif; }
.v text { font: 10px "Noto Sans", sans-serif; }
.q text { font: 11px "Noto Sans", "Noto Sans CJK KR", sans-serif; }

.vscroll { width: 12px; flex: none; display: flex; flex-direction: column; background: #ddd; }
.vscroll button { height: 11px; display: flex; flex-direction: column; align-items: center; justify-content: center; background: linear-gradient(90deg, #d5e8fc, #a5c8ee); border: 1px solid #5d8ab9; }
.vscroll .tall { height: 21px; gap: 7px; }
.track { flex: 1; background: linear-gradient(90deg, #cfcfcf, #ececec); display: flex; flex-direction: column; justify-content: center; }
.thumb { height: 6px; margin-top: 86px; background: #bcdaf8; border: solid #3f73ab; border-width: 2px 0; }
.up { border: 3px solid transparent; border-top: 0; border-bottom-color: #1d4a80; }
.down { border: 3px solid transparent; border-bottom: 0; border-top-color: #1d4a80; }
.sq0 { width: 6px; height: 6px; border: 1px solid #1d4a80; }
.tabs { flex: none; height: 17px; display: flex; align-items: stretch; background: #d8d8d8; border-top: 1px solid #999; }
.split { width: 4px; margin: 2px 2px 2px 2px; border: 1px solid #aaa; background: #eee; }
.nav { width: 13px; height: 14px; margin-top: 1px; flex: none; border: 1px solid #bbb; background: #e8e8e8; color: #888; font-size: 9px; line-height: 10px; }
.tab { margin-left: 2px; padding: 0 6px 0 4px; background: #fbf4f2; font-weight: 700; font-size: 11px; line-height: 15px; clip-path: polygon(0 0, 100% 0, calc(100% - 5px) 100%, 0 100%); }
.hscroll { flex: 1; display: flex; margin: 0 12px 0 auto; max-width: 503px; }
.htrack { flex: 1; background: linear-gradient(#cfcfcf, #ececec); margin-top: 1px; }
.status { position: relative; flex: none; height: 16px; display: flex; align-items: center; padding-left: 15px; font-size: 11px; line-height: 14px; color: #234; background: linear-gradient(#d8e8fb, #b2cdec); border-top: 1px solid #e8f2fd; white-space: nowrap; }
.bl { border-left: 1px solid #8ca9cb; line-height: 10px; }
.a { width: 39px; }
.d { width: 69px; }
.c1 { width: 49px; padding-left: 14px; }
.c2 { width: 33px; }
.c3 { width: 123px; padding-left: 2px; }
.c4 { width: 31px; padding-left: 11px; }
.c5 { width: 35px; }
.c6 { width: 27px; padding-left: 2px; }
.ime { position: absolute; right: 0; bottom: 0; height: 22px; width: 98px; display: flex; align-items: center; justify-content: space-around; background: #bdd3ee; border: solid #fff; border-width: 2px 0 0 2px; box-shadow: -1px -1px #7a97bb; color: #111; }
.ime .ic { width: 14px; height: 14px; }
.ime b { font-size: 13px; }

.taskbar { flex: none; height: 48px; display: flex; background: linear-gradient(#4a86f0, #245edb 6px, #2358d8 40px, #1c49b8); color: #fff; }
.start { width: 74px; height: 23px; display: flex; align-items: center; gap: 5px; padding-left: 7px; border-radius: 0 10px 10px 0; background: linear-gradient(#62b862, #3b973b 30%, #379037 75%, #256f28); font-size: 14px; font-weight: 500; text-shadow: 1px 1px 1px #143c14; }
.quick { display: grid; grid-template-columns: repeat(3, 16px); gap: 8px 3px; padding: 4px 0 0 8px; align-content: start; }
.more { width: 27px; text-align: right; padding: 0 6px 0 0; line-height: 14px; }
.tasks { flex: 1; min-width: 0; display: grid; grid-template-columns: repeat(6, 1fr); grid-auto-rows: 21px; gap: 3px 2px; padding: 2px 0 0; }
.tasks button { min-width: 0; overflow: hidden; display: flex; align-items: center; gap: 4px; padding-left: 7px; border-radius: 2px; background: linear-gradient(#5f9afa, #3c7ff0 4px, #3675e8); font-size: 11px; }
.tasks .ic { width: 14px; height: 14px; }
.tasks .act { background: #1c46a8; box-shadow: inset 1px 1px #12347f; }
.lang { width: 95px; display: flex; align-items: center; gap: 2px; padding-left: 12px; }
.on1 { width: 15px; height: 18px; background: #1d4cb4; font: 700 16px/18px "Liberation Sans", sans-serif; text-align: center; }
.lang .han { font: 500 14px/16px "Noto Sans CJK KR", sans-serif; }
.qm { width: 10px; height: 12px; margin-left: 4px; background: #fff; color: #111; font: 700 10px/12px "Liberation Sans", sans-serif; text-align: center; }
.lang .ic { margin-left: 2px; }
.tray { width: 86px; display: flex; align-items: center; background: linear-gradient(#3cb0f8, #1290e8 6px, #118ee6 40px, #0c74c8); border-left: 1px solid #0a4c9c; }
.exp { width: 13px; height: 13px; flex: none; margin-left: -7px; border-radius: 50%; background: #2f8ef0; border: 1px solid #bfe0ff; }
.ticons { display: flex; flex-direction: column; gap: 2px; align-items: center; width: 18px; }
.ticons .ic { width: 13px; height: 13px; }
.ticons b { width: 11px; height: 12px; background: #e8f2ff; color: #1d4cb4; font-size: 10px; line-height: 12px; text-align: center; }
.clock { flex: 1; display: flex; flex-direction: column; align-items: center; font-size: 10px; line-height: 15px; white-space: nowrap; }
```
